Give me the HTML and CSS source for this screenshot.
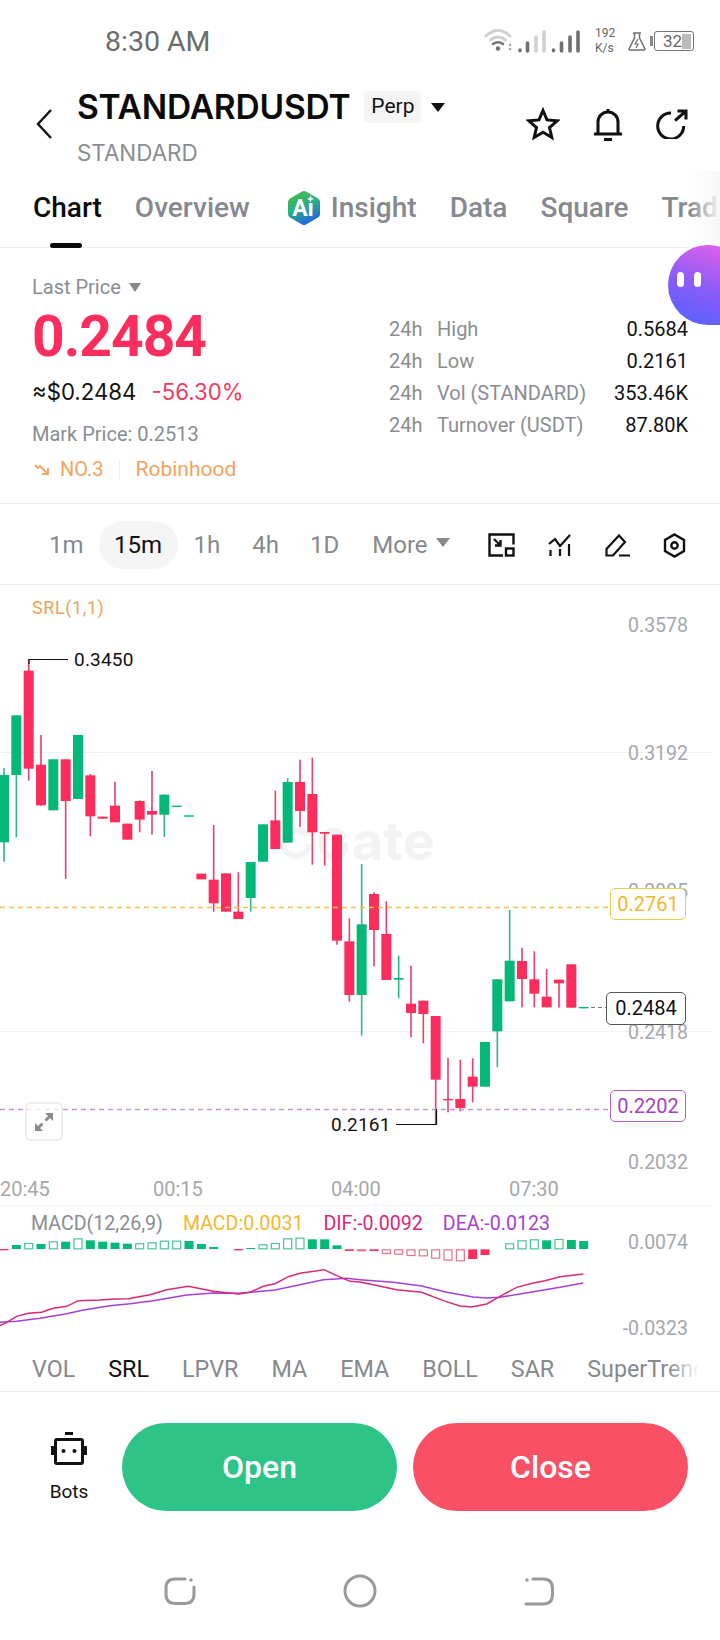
FILE: index.html
```html
<!DOCTYPE html>
<html lang="en">
  <head>
    <title>STANDARDUSDT</title>
    <meta charset="utf-8" />
    <meta name="viewport" content="width=device-width, initial-scale=1" />
    <link rel="stylesheet" href="styles.css">
  </head>
  <body>
    <main class="phone">
      <header class="status">
        <span class="time">8:30 AM</span>
        <div class="status-icons">
          <svg class="signal" width="100" height="26" viewBox="0 0 100 26" fill="none" stroke-linecap="round">
            <path d="M3 8Q15-3 27 8M7.5 12Q15 6 22.5 12" stroke="#d0d0d0" stroke-width="3"/>
            <path d="M10 16Q15 12.5 20 16" stroke="#707070" stroke-width="2.6"/>
            <circle cx="15" cy="20.5" r="2.2" fill="#707070"/>
            <path d="M25.5 17.5h3l-1.5-2zM25.5 20.5h3l-1.5 2z" fill="#777"/>
            <path d="M37 22v.6M44.5 15v8M70.5 22v.6M78.500 15v8M87 9v14M95 4v19" stroke="#707070" stroke-width="3.6"/>
            <path d="M53 9v14M61 4v19" stroke="#d0d0d0" stroke-width="3.6"/>
          </svg>
          <div class="speed"><span>192</span><span>K/s</span></div>
          <svg class="flask" width="18" height="19" viewBox="0 0 18 19" fill="none" stroke="#707070" stroke-width="1.5">
            <path d="M5 1h8M6.5 1v5L1 17q0 1 1 1h14q1 0 1-1L11.5 6V1"/>
            <path d="M10 7l-3 5h3l-2 4" stroke-width="1.2"/>
          </svg>
          <div class="battery-nub"></div>
          <div class="battery"><span>32</span><i class="battery-fill"></i></div>
        </div>
      </header>

      <section class="symbol">
        <svg class="back" width="16" height="30" viewBox="0 0 16 30" fill="none" stroke="#111" stroke-width="2.4">
          <path d="M15 1L2 15l13 14"/>
        </svg>
        <div class="symbol-name">
          <div class="symbol-top">
            <h1>STANDARDUSDT</h1>
            <span class="chip">Perp</span>
            <i class="caret caret-black"></i>
          </div>
          <div class="symbol-sub">STANDARD</div>
        </div>
        <div class="symbol-actions">
          <svg width="34" height="34" viewBox="0 0 34 34" fill="none" stroke="#111" stroke-width="3">
            <path d="M17 3.5l4 9.4 10.2.9-7.7 6.7 2.3 10-8.800-5.300-8.800 5.300 2.300-10-7.700-6.700 10.200-.9z"/>
          </svg>
          <svg width="30" height="33" viewBox="0 0 30 33" fill="none" stroke="#111" stroke-width="3">
            <path d="M5 26V14a10 10 0 0 1 20 0v12M15 1v3M1 26h28M11 31.500h8"/>
          </svg>
          <svg width="32" height="30" viewBox="0 0 32 30" fill="none" stroke="#111" stroke-width="3">
            <path d="M15 4A13 13 0 1 0 27.700 17M19 11.700L30 2M21.500 2H30v8.500"/>
          </svg>
        </div>
      </section>

      <nav class="tabs">
        <a class="tab tab-active">Chart</a>
        <a class="tab">Overview</a>
        <a class="tab tab-ai">
          <svg width="34" height="36" viewBox="0 0 34 36">
            <defs>
              <linearGradient id="aiFill" x1="0.1" y1="0" x2="0.5" y2="1">
                <stop offset="0" stop-color="#4cbf3f"/>
                <stop offset="0.55" stop-color="#25ae8c"/>
                <stop offset="1" stop-color="#2563e0"/>
              </linearGradient>
            </defs>
            <path d="M15 1.500q2-1 4 0l12 7q2 1 2 3.500v12q0 2.500-2 3.500l-12 7q-2 1-4 0l-12-7q-2-1-2-3.500V12q0-2.500 2-3.500z" fill="url(#aiFill)"/>
            <path d="M23.500 5.500l1 2.500 2.500 1-2.500 1-1 2.500-1-2.500-2.500-1 2.500-1z" fill="#fff"/>
            <text x="16" y="26" text-anchor="middle" class="ai-text">Aı</text>
          </svg>
          Insight
        </a>
        <a class="tab">Data</a>
        <a class="tab">Square</a>
        <a class="tab">Trading</a>
      </nav>
      <div class="tab-line"><i></i></div>

      <div class="bubble"><i></i><i></i></div>

      <section class="ticker">
        <div class="price">
          <div class="price-label">Last Price <i class="caret caret-grey"></i></div>
          <div class="price-last">0.2484</div>
          <div class="price-usd">≈$0.2484 <span class="price-change">-56.30%</span></div>
          <div class="price-mark">Mark Price: 0.2513</div>
          <div class="price-tags">
            <svg width="17" height="12" viewBox="0 0 17 12" fill="none" stroke="#f4a25e" stroke-width="1.800">
              <path d="M1 2l3 3 2-2 7 7M14 5v6H8"/>
            </svg>
            <span>NO.3</span>
            <i class="tag-sep"></i>
            <span class="tag-name">Robinhood</span>
          </div>
        </div>
        <dl class="stats">
          <div class="stat"><dt>24h</dt><dd>High</dd><b>0.5684</b></div>
          <div class="stat"><dt>24h</dt><dd>Low</dd><b>0.2161</b></div>
          <div class="stat"><dt>24h</dt><dd>Vol (STANDARD)</dd><b>353.46K</b></div>
          <div class="stat"><dt>24h</dt><dd>Turnover (USDT)</dd><b>87.80K</b></div>
        </dl>
      </section>

      <section class="frames">
        <a class="frame">1m</a>
        <a class="frame frame-active">15m</a>
        <a class="frame">1h</a>
        <a class="frame">4h</a>
        <a class="frame">1D</a>
        <a class="frame frame-more">More <i class="caret caret-grey"></i></a>
        <div class="frame-tools">
          <svg width="27" height="24" viewBox="0 0 27 24" fill="none" stroke="#111" stroke-width="2.400">
            <path d="M15 22.500H1.500V1.500h24v10M6 6l6 6M12.500 7v5.500H7"/>
            <rect x="18" y="15.500" width="7.500" height="7"/>
          </svg>
          <svg width="24" height="22" viewBox="0 0 24 22" fill="none" stroke="#111" stroke-width="2.200">
            <path d="M1 10l6-5 5 7L22 1M2.500 16v6M12 15v7M21 10v12"/>
          </svg>
          <svg width="25" height="23" viewBox="0 0 25 23" fill="none" stroke="#111" stroke-width="2.200">
            <path d="M1.500 21.500V15L14 1.500 20 8 8 21.500zM14 21.500h11"/>
          </svg>
          <svg width="23" height="25" viewBox="0 0 23 25" fill="none" stroke="#111" stroke-width="2.400">
            <path d="M11.500 1.500l9.500 5.500v11l-9.500 5.500L2 18V7z"/>
            <circle cx="11.500" cy="12.500" r="3.200"/>
          </svg>
        </div>
      </section>

      <section class="chart">
        <div class="watermark">
          <svg width="38" height="32" viewBox="0 0 38 32" fill="none" stroke="#f2f4f4" stroke-width="6">
            <path d="M30 8A13 13 0 1 0 32 16"/>
          </svg>
          <span class="watermark-g">G</span>ate
        </div>
        <svg id="plot" class="plot" width="720" height="752" viewBox="0 586 720 752" fill="none">
          <path d="M0 753.500H712M0 1032.500H712M0 1206.500H712M0 1338.500H712" stroke="#f0f1f2"/>
          <g id="candles"></g>
          <path d="M0 908.500H610" stroke="#f5c04a" stroke-width="1.300" stroke-dasharray="5 4"/>
          <path d="M0 1110.500H610" stroke="#c98fdc" stroke-width="1.500" stroke-dasharray="5 4"/>
          <path d="M29 665V660.500H68M396 1125.500H436.500V1110" stroke="#111" stroke-width="1.200"/>
          <path d="M591 1008.500H606" stroke="#777" stroke-width="1.200" stroke-dasharray="4 3"/>
          <g id="hist"></g>
          <polyline id="dea" stroke="#a83fd8" stroke-width="1.500"/>
          <polyline id="dif" stroke="#d82a74" stroke-width="1.500"/>
        </svg>

        <span class="label srl-title">SRL(1,1)</span>
        <span class="label extreme extreme-high">0.3450</span>
        <span class="label extreme extreme-low">0.2161</span>

        <span class="label axis axis-a">0.3578</span>
        <span class="label axis axis-b">0.3192</span>
        <span class="label axis axis-c">0.2805</span>
        <span class="label axis axis-d">0.2418</span>
        <span class="label axis axis-e">0.2032</span>
        <span class="label axis axis-f">0.0074</span>
        <span class="label axis axis-g">-0.0323</span>

        <span class="tagbox tagbox-yellow">0.2761</span>
        <span class="tagbox tagbox-last">0.2484</span>
        <span class="tagbox tagbox-purple">0.2202</span>

        <div class="zoom-btn">
          <svg width="20" height="20" viewBox="0 0 20 20" fill="#8a8a8a">
            <path d="M19 1v8l-3-3-3.500 3.500-2-2L14 4l-3-3zM1 19v-8l3 3 3.500-3.500 2 2L6 16l3 3z"/>
          </svg>
        </div>

        <span class="label time-tick tick-a">20:45</span>
        <span class="label time-tick tick-b">00:15</span>
        <span class="label time-tick tick-c">04:00</span>
        <span class="label time-tick tick-d">07:30</span>

        <div class="macd-legend">
          <span class="macd-name">MACD(12,26,9)</span>
          <span class="macd-val">MACD:0.0031</span>
          <span class="macd-dif">DIF:-0.0092</span>
          <span class="macd-dea">DEA:-0.0123</span>
        </div>
      </section>

      <nav class="indicators">
        <a>VOL</a>
        <a class="indicator-on">SRL</a>
        <a>LPVR</a>
        <a>MA</a>
        <a>EMA</a>
        <a>BOLL</a>
        <a>SAR</a>
        <a>SuperTrend</a>
      </nav>

      <section class="actions">
        <div class="bots">
          <svg width="36" height="33" viewBox="0 0 36 33" fill="none" stroke="#111">
            <path d="M14 1.500h8M1.500 14v9M34.500 14v9" stroke-width="3"/>
            <rect x="4.500" y="7.500" width="27" height="24" rx="1.500" stroke-width="3"/>
            <circle cx="12.500" cy="19" r="2" fill="#111" stroke="none"/>
            <circle cx="23.500" cy="19" r="2" fill="#111" stroke="none"/>
          </svg>
          <span>Bots</span>
        </div>
        <button class="trade trade-open">Open</button>
        <button class="trade trade-close">Close</button>
      </section>

      <footer class="navbar">
        <svg width="34" height="30" viewBox="0 0 34 30" fill="none" stroke="#9a9a9a" stroke-width="3" stroke-linecap="round">
          <path d="M22 3H12Q3 3 3 12v6q0 9.500 9.500 9.500h9q9.500 0 9.500-9.500V11"/>
          <circle cx="28" cy="4" r="1.700" fill="#9a9a9a" stroke="none"/>
        </svg>
        <svg width="36" height="36" viewBox="0 0 36 36" fill="none" stroke="#9a9a9a" stroke-width="3">
          <circle cx="18" cy="18" r="15"/>
        </svg>
        <svg width="32" height="30" viewBox="0 0 32 30" fill="none" stroke="#9a9a9a" stroke-width="3" stroke-linecap="round">
          <path d="M9 3h10q9.500 0 9.500 9.500v6q0 9.500-9.500 9.500H2"/>
          <circle cx="3" cy="4" r="1.700" fill="#9a9a9a" stroke="none"/>
        </svg>
      </footer>
    </main>
    <script src="chart.js"></script>
  </body>
</html>
```

FILE: styles.css
```css
* {
  box-sizing: border-box;
}
body {
  margin: 0;
  background: #fff;
  font-family: Roboto, "Liberation Sans", sans-serif;
  color: #111;
}
i {
  display: block;
}
a {
  display: block;
}
.phone {
  position: relative;
  width: 720px;
  height: 1640px;
  overflow: hidden;
}

.caret {
  display: inline-block;
  width: 0;
  height: 0;
  border-style: solid;
  border-width: 9px 6.5px 0;
  border-color: #888 transparent transparent;
}
.caret-black {
  border-top-color: #111;
}

.status {
  display: flex;
  align-items: center;
  justify-content: space-between;
  height: 82px;
  padding: 0 26px 0 105px;
}
.time {
  font-size: 28.5px;
  color: #6c6c6c;
}
.status-icons {
  display: flex;
  align-items: center;
  height: 26px;
}
.speed {
  display: flex;
  flex-direction: column;
  width: 33px;
  margin-left: 12px;
  font-size: 12px;
  line-height: 15px;
  color: #666;
}
.flask {
  margin-right: 4px;
}
.battery-nub {
  width: 3px;
  height: 10px;
  background: #888;
}
.battery {
  display: flex;
  align-items: center;
  width: 40px;
  height: 20px;
  margin-left: 1px;
  padding: 1px 1px 1px 8px;
  border: 1.5px solid #777;
  border-radius: 3px;
  font-size: 17px;
  color: #666;
}
.battery-fill {
  width: 10px;
  height: 15px;
  margin-left: auto;
  margin-right: 1px;
  background: #bbb;
}

.symbol {
  display: flex;
  height: 88px;
  padding-left: 36px;
}
.back {
  margin-top: 27px;
}
.symbol-name {
  margin-left: 25px;
  padding-top: 4px;
}
.symbol-top {
  display: flex;
  align-items: center;
  height: 42px;
}
.symbol-top h1 {
  margin: 0;
  font-family: Inter, Roboto, sans-serif;
  font-size: 33.5px;
  font-weight: 600;
  letter-spacing: -0.2px;
  color: #0b0b0b;
}
.chip {
  width: 57px;
  height: 32px;
  margin-left: 14px;
  line-height: 31px;
  text-align: center;
  font-size: 21px;
  background: #f5f5f5;
  border-radius: 4px;
}
.symbol-top .caret {
  margin-left: 10px;
  border-width: 9px 7px 0;
}
.symbol-sub {
  margin-top: 11px;
  font-family: Inter, Roboto, sans-serif;
  font-size: 22.4px;
  color: #8a8d92;
}
.symbol-actions {
  display: flex;
  align-items: center;
  gap: 33px;
  height: 84px;
  margin-left: auto;
  padding-right: 32px;
}

.tabs {
  position: relative;
  display: flex;
  align-items: center;
  gap: 33px;
  height: 74px;
  padding: 1px 0 0 33px;
  overflow: hidden;
  white-space: nowrap;
  font-size: 28px;
  color: #86898e;
}
.tabs::after {
  content: "";
  position: absolute;
  top: 0;
  right: 0;
  bottom: 0;
  width: 30px;
  background: linear-gradient(to right, rgba(250, 250, 250, 0), #f7f7f7);
}
.tab {
  font-weight: 500;
}
.tab-active {
  color: #0b0b0b;
}
.tab-ai {
  display: flex;
  align-items: center;
  gap: 10px;
  margin-left: 4px;
}
.ai-text {
  font-size: 23px;
  font-weight: 700;
  fill: #fff;
}
.tab-line {
  height: 5px;
  padding-left: 50px;
  border-bottom: 1px solid #eee;
}
.tab-line i {
  width: 32px;
  height: 5px;
  margin-top: -1px;
  border-radius: 3px;
  background: #0b0b0b;
}

.bubble {
  position: absolute;
  top: 245px;
  left: 668px;
  display: flex;
  gap: 10px;
  width: 80px;
  height: 80px;
  padding: 27px 0 0 9px;
  border-radius: 40px 40px 12px 40px;
  background: linear-gradient(200deg, #f060e8, #8a5cf8 55%, #5060ff);
}
.bubble i {
  width: 7px;
  height: 15px;
  border-radius: 4px;
  background: #fff;
}

.ticker {
  display: flex;
  justify-content: space-between;
  height: 256px;
  padding: 27px 32px 0;
  border-bottom: 1px solid #eee;
}
.price-label {
  display: flex;
  align-items: center;
  gap: 8px;
  height: 24px;
  font-size: 20px;
  color: #8a8d92;
}
.price-label .caret {
  border-width: 9px 6px 0;
}
.price-last {
  height: 60px;
  margin-top: 8px;
  font-size: 57px;
  line-height: 60px;
  font-weight: 700;
  letter-spacing: -1px;
  color: #fb2d5c;
}
.price-usd {
  height: 30px;
  margin-top: 10px;
  font-family: Inter, Roboto, sans-serif;
  font-size: 22.2px;
  line-height: 30px;
}
.price-change {
  margin-left: 9px;
  color: #f5385f;
}
.price-mark {
  height: 24px;
  margin-top: 15px;
  font-size: 20px;
  line-height: 24px;
  color: #8a8d92;
}
.price-tags {
  display: flex;
  align-items: center;
  height: 24px;
  margin-top: 11px;
  font-size: 20px;
  color: #f4a25e;
}
.price-tags span {
  margin-left: 9px;
}
.price-tags svg {
  margin-left: 2px;
}
.tag-sep {
  width: 1px;
  height: 19px;
  margin-left: 15px;
  background: #eee;
}
.price-tags .tag-name {
  margin-left: 16px;
  font-size: 21px;
}
.stats {
  width: 299px;
  margin: 38px 0 0;
}
.stat {
  display: flex;
  align-items: center;
  height: 32px;
  font-size: 20px;
  color: #8a8d92;
}
.stat dt {
  width: 48px;
}
.stat dd {
  margin: 0;
}
.stat b {
  margin-left: auto;
  font-weight: 400;
  color: #111;
}

.frames {
  display: flex;
  align-items: center;
  height: 81px;
  padding: 2px 0 0 49px;
  border-bottom: 1px solid #eee;
  font-size: 24px;
  color: #86898e;
}
.frame-active {
  width: 79px;
  height: 48px;
  margin: 0 16px 0 15px;
  border-radius: 24px;
  background: #f5f5f5;
  text-align: center;
  line-height: 48px;
  color: #111;
}
.frame:nth-child(4) {
  margin-left: 32px;
}
.frame:nth-child(5) {
  margin-left: 31px;
}
.frame-more {
  display: flex;
  align-items: center;
  gap: 8px;
  margin-left: 33px;
}
.frame-more .caret {
  margin-top: -6px;
  border-width: 9px 7px 0;
}
.frame-tools {
  display: flex;
  align-items: center;
  gap: 33px;
  margin-left: 38px;
}

.chart {
  position: relative;
  height: 753px;
}
.plot {
  position: absolute;
  top: 0;
  left: 0;
}
.watermark {
  position: absolute;
  top: 226px;
  left: 277px;
  display: flex;
  align-items: baseline;
  font-family: Inter, Roboto, sans-serif;
  font-size: 54px;
  line-height: 60px;
  font-weight: 700;
  color: #f2f4f4;
}
.watermark-g {
  margin-left: 2px;
  margin-right: 2px;
  font-size: 44px;
}
.label {
  position: absolute;
  font-size: 19.5px;
  line-height: 22px;
}
.srl-title {
  top: 12px;
  left: 32px;
  font-size: 18px;
  letter-spacing: 0.6px;
  color: #e8a45c;
}
.extreme {
  font-size: 19px;
  letter-spacing: 0.2px;
}
.extreme-high {
  top: 64px;
  left: 74px;
}
.extreme-low {
  top: 529px;
  left: 331px;
}
.axis {
  right: 32px;
  color: #a5a8ac;
}
.axis-a { top: 30px; }
.axis-b { top: 158px; }
.axis-c { top: 296px; }
.axis-d { top: 437px; }
.axis-e { top: 567px; }
.axis-f { top: 647px; }
.axis-g { top: 733px; }
.tagbox {
  position: absolute;
  left: 610px;
  width: 76px;
  height: 32px;
  border: 1px solid;
  border-radius: 5px;
  background: #fff;
  text-align: center;
  font-size: 20px;
  line-height: 30px;
}
.tagbox-yellow {
  top: 303px;
  color: #f4b72e;
  border-color: #f5c84f;
}
.tagbox-purple {
  top: 505px;
  color: #a63fc7;
  border-color: #b25ed0;
}
.tagbox-last {
  top: 407px;
  left: 606px;
  width: 80px;
  height: 33px;
  color: #111;
  border-color: #555;
}
.zoom-btn {
  position: absolute;
  top: 517px;
  left: 25px;
  display: flex;
  align-items: center;
  justify-content: center;
  width: 38px;
  height: 39px;
  border: 2px solid #eee;
  border-radius: 6px;
  background: rgba(255, 255, 255, 0.75);
}
.time-tick {
  top: 593px;
  font-size: 20px;
  color: #a5a8ac;
}
.tick-a { left: 0; }
.tick-b { left: 153px; }
.tick-c { left: 331px; }
.tick-d { left: 509px; }
.macd-legend {
  position: absolute;
  top: 628px;
  left: 31px;
  display: flex;
  gap: 20px;
  font-size: 19.6px;
  line-height: 22px;
  white-space: nowrap;
}
.macd-name { color: #8a8d92; }
.macd-val { color: #f4b72e; }
.macd-dif { color: #d6287d; }
.macd-dea { color: #a93fd0; }

.indicators {
  position: relative;
  display: flex;
  align-items: center;
  gap: 33px;
  height: 54px;
  padding: 8px 0 0 32px;
  overflow: hidden;
  white-space: nowrap;
  border-bottom: 1px solid #eee;
  font-size: 23.3px;
  color: #86898e;
}
.indicators::after {
  content: "";
  position: absolute;
  top: 0;
  right: 0;
  bottom: 1px;
  width: 52px;
  background: linear-gradient(to right, rgba(255, 255, 255, 0), #fff 60%);
}
.indicator-on {
  color: #111;
}

.actions {
  display: flex;
  align-items: center;
  gap: 16px;
  height: 150px;
  padding: 0 32px 0 46px;
}
.bots {
  display: flex;
  flex-direction: column;
  align-items: center;
  gap: 15px;
  width: 46px;
  margin-right: 14px;
  font-size: 19px;
}
.trade {
  flex: 1;
  height: 88px;
  border: 0;
  border-radius: 44px;
  font-family: inherit;
  font-size: 32px;
  font-weight: 500;
  color: #fff;
}
.trade-open {
  background: #2ec487;
}
.trade-close {
  background: #f95065;
}

.navbar {
  display: grid;
  grid-template-columns: repeat(3, 1fr);
  justify-items: center;
  align-items: center;
  height: 60px;
  margin-top: 19px;
  padding: 0 90px;
}
```

FILE: chart.js
```js
// candles and macd are traced off the screen, so values are in 3x pixels
// from y=600 (candles) and y=1160 (macd), x = 12 + 37 * slot
let slotX = i => 12 + 37 * i;

// [slot, wickTop, wickBottom, bodyTop, bodyBottom]
let red = [
  [2,182,545,215,509], [3,408,620,497,619], [5,481,840,481,606], [7,525,712,529,652],
  [8,653,659,653,659], [9,548,670,620,670], [10,674,722,674,722], [11,604,700,606,662],
  [12,516,707,636,647], [16,824,841,824,841], [17,678,938,842,913], [18,823,938,823,938],
  [19,820,960,938,960], [22,575,750,664,750], [24,482,684,549,636], [25,476,797,585,700],
  [26,699,800,699,704], [27,707,1037,707,1025], [28,958,1208,1027,1188], [30,880,1102,885,993],
  [31,907,1143,1005,1143], [33,1100,1315,1214,1242], [34,1205,1333,1205,1245], [35,1251,1576,1251,1442],
  [36,1377,1540,1500,1504], [37,1382,1537,1500,1527], [38,1378,1510,1433,1463], [42,1046,1225,1086,1140],
  [43,1057,1225,1141,1184], [44,1110,1225,1193,1225], [45,1142,1226,1142,1153], [46,1096,1226,1096,1226]
];
let green = [
  [0,507,788,528,730], [1,349,715,349,528], [4,481,634,481,634], [6,408,600,408,600],
  [13,586,714,587,647], [14,620,624,620,624], [15,649,653,649,653], [20,789,938,789,897],
  [21,676,788,676,788], [23,538,731,549,731], [29,795,1310,976,1188], [32,1070,1198,1137,1142],
  [39,1329,1463,1329,1463], [40,1141,1405,1141,1297], [41,933,1207,1085,1207], [47,1224,1228,1224,1228]
];

// [slot, top, bottom, hollow]
let histGreen = [
  [1,258,270], [2,252,271,1], [3,255,270], [4,247,271,1], [5,248,270], [6,238,271,1],
  [7,244,270], [8,248,270], [9,251,270], [10,254,270], [11,253,271,1], [12,250,271,1],
  [13,245,271,1], [14,245,271,1], [15,246,270], [16,255,270], [17,264,270], [20,267,270],
  [21,256,271,1], [22,252,271,1], [23,238,271,1], [24,236,271,1], [25,241,270], [26,241,270],
  [27,259,270], [41,253,271,1], [42,244,271,1], [43,241,271,1], [44,244,270], [45,240,271,1],
  [46,243,270], [47,246,270]
];
let histRed = [
  [0,270,274], [19,270,274], [28,271,276], [29,271,277,1], [30,271,276], [31,271,285,1],
  [32,271,287,1], [33,271,291,1], [34,271,292,1], [35,271,299,1], [36,271,305,1], [37,271,307,1],
  [38,271,300], [39,271,288]
];

let dif = [
  [0,500],[20,490],[50,472],[85,463],[125,460],[160,448],[200,442],[235,425],[300,423],[345,420],
  [385,419],[450,407],[500,392],[565,382],[640,397],[715,405],[750,400],[790,382],[825,374],[865,353],
  [900,343],[972,332],[1010,350],[1050,367],[1080,369],[1120,377],[1190,392],[1265,400],[1330,425],
  [1380,441],[1415,444],[1460,435],[1500,412],[1550,385],[1600,372],[1635,365],[1680,353],[1750,345]
];
let dea = [
  [0,490],[50,487],[120,478],[200,464],[250,453],[330,440],[390,434],[460,425],[560,408],[640,402],
  [715,403],[825,393],[900,377],[970,362],[1040,358],[1080,362],[1180,370],[1265,381],[1340,400],
  [1420,414],[1460,417],[1500,415],[1600,398],[1680,385],[1750,372]
];

let svgNS = "http://www.w3.org/2000/svg";
let add = (parent, tag, attrs) => {
  let el = document.createElementNS(svgNS, tag);
  for (let k in attrs) el.setAttribute(k, attrs[k]);
  parent.appendChild(el);
};

let drawCandles = (list, body, wick) => {
  list.forEach(([slot, wt, wb, bt, bb]) => {
    let x = slotX(slot) / 3;
    add(candles, "rect", { x: x - 0.8, y: 600 + wt / 3, width: 1.6, height: (wb - wt) / 3, fill: wick });
    add(candles, "rect", { x: x - 5, y: 600 + bt / 3, width: 10, height: Math.max(bb - bt, 3) / 3, fill: body });
  });
};
drawCandles(red, "#fb2d5c", "#e8406a");
drawCandles(green, "#04b878", "#2bb88a");

let drawHist = (list, fill, stroke) => {
  list.forEach(([slot, top, bottom, hollow]) => {
    let x = slotX(slot) / 3 - 4.5;
    let y = 1160 + top / 3;
    let h = (bottom - top) / 3;
    if (hollow) {
      add(hist, "rect", { x: x + 0.5, y: y + 0.5, width: 8, height: h - 1, stroke: stroke, "stroke-width": 1.2 });
    } else {
      add(hist, "rect", { x: x, y: y, width: 9, height: h, fill: fill });
    }
  });
};
drawHist(histGreen, "#04b878", "#4cc09a");
drawHist(histRed, "#fb2d5c", "#e8708c");

let toPoints = line => line.map(([x, y]) => `${x / 3},${1160 + y / 3}`).join(" ");
document.querySelector("#dif").setAttribute("points", toPoints(dif));
document.querySelector("#dea").setAttribute("points", toPoints(dea));
```
